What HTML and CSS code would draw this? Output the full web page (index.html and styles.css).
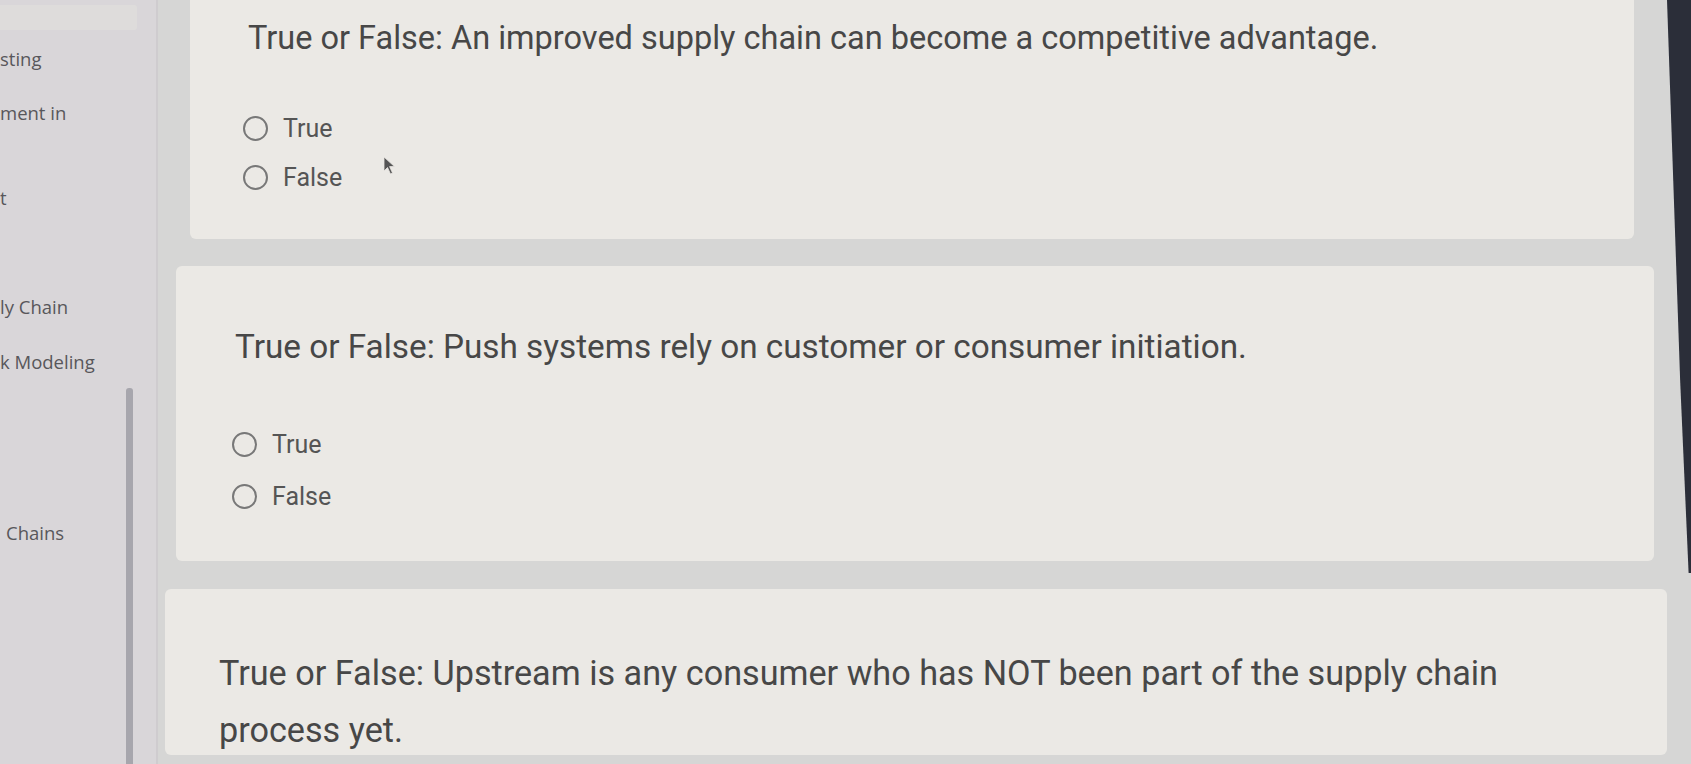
FILE: index.html
```html
<!DOCTYPE html>
<html lang="en">
<head>
<meta charset="utf-8">
<title>Quiz</title>
<link rel="stylesheet" href="styles.css">
</head>
<body>
<div class="screen">
  <aside class="sidebar">
    <div class="search"></div>
    <ul class="nav">
      <li class="nav-item n1">sting</li>
      <li class="nav-item n2">ment in</li>
      <li class="nav-item n3">t</li>
      <li class="nav-item n4">ly Chain</li>
      <li class="nav-item n5">k Modeling</li>
      <li class="nav-item n6">Chains</li>
    </ul>
    <div class="thumb"></div>
  </aside>
  <main class="main">
    <section class="card card1">
      <h2 class="question">True or False: An improved supply chain can become a competitive advantage.</h2>
      <div class="options">
        <label class="option"><span class="radio"></span><span class="opt-text">True</span></label>
        <label class="option"><span class="radio"></span><span class="opt-text">False</span></label>
      </div>
      <svg class="cursor" width="14" height="20" viewBox="0 0 14 20" aria-hidden="true">
        <path d="M1 1 L1 15 L4.5 11.5 L7.5 18 L9.5 17 L6.6 10.6 L11.5 10.6 Z" fill="#555" stroke="#e8e6e2" stroke-width="0.8" stroke-linejoin="round"/>
      </svg>
    </section>
    <section class="card card2">
      <h2 class="question">True or False: Push systems rely on customer or consumer initiation.</h2>
      <div class="options">
        <label class="option"><span class="radio"></span><span class="opt-text">True</span></label>
        <label class="option"><span class="radio"></span><span class="opt-text">False</span></label>
      </div>
    </section>
    <section class="card card3">
      <h2 class="question">True or False: Upstream is any consumer who has NOT been part of the supply chain process yet.</h2>
    </section>
  </main>
  <div class="bezel"></div>
</div>
</body>
</html>
```
FILE: styles.css
```css
* { box-sizing: border-box; }
html, body { margin: 0; padding: 0; }
body {
  width: 1691px;
  height: 764px;
  overflow: hidden;
  background: #d6d6d5;
  font-family: Roboto, "Liberation Sans", Arial, sans-serif;
}
.screen {
  display: flex;
  height: 764px;
}
.sidebar {
  position: relative;
  width: 158px;
  flex: 0 0 158px;
  background: #d9d6d9;
  border-right: 2px solid #cfcccf;
  padding-top: 5px;
  overflow: hidden;
}
.search {
  width: 137px;
  height: 25px;
  background: #dedcdb;
  border-radius: 0 3px 3px 0;
}
.nav {
  list-style: none;
  margin: 0;
  padding: 0;
  font-family: "Open Sans", "Liberation Sans", sans-serif;
  font-size: 18.5px;
  color: #58575b;
}
.nav-item { line-height: 24px; white-space: nowrap; }
.n1 { margin-top: 17px; }
.n2 { margin-top: 30px; }
.n3 { margin-top: 61px; }
.n4 { margin-top: 85px; }
.n5 { margin-top: 31px; }
.n6 { margin-top: 147px; padding-left: 6px; }
.thumb {
  position: absolute;
  left: 126px;
  top: 388px;
  width: 7px;
  height: 400px;
  background: #a7a6ad;
  border-radius: 3px;
}
.main {
  flex: 1;
  display: flex;
  flex-direction: column;
  background: #d6d6d5;
}
.card {
  background: #ebe9e5;
  border-radius: 6px;
  color: #484848;
}
.card1 {
  position: relative;
  margin: -10px 33px 0 32px;
  height: 249px;
  padding: 28px 0 0 58px;
}
.cursor {
  position: absolute;
  left: 193px;
  top: 166px;
}
.card2 {
  margin: 27px 13px 0 18px;
  height: 295px;
  padding: 61px 0 0 59px;
}
.card3 {
  margin: 28px 0 0 7px;
  height: 166px;
  padding: 56px 0 0 54px;
}
.question {
  margin: 0;
  font-weight: 400;
  font-size: 32.5px;
  line-height: 40px;
  color: #474747;
}
.card2 .question { font-size: 33.3px; }
.card3 .question {
  font-size: 34.2px;
  line-height: 57px;
  max-width: 1360px;
}
.options {
  display: flex;
  flex-direction: column;
  margin-top: 46px;
  margin-left: -5px;
}
.card2 .options { margin-top: 51px; margin-left: -3px; }
.option {
  display: flex;
  align-items: center;
  gap: 15px;
  height: 49px;
}
.card2 .option { height: 52px; }
.radio {
  width: 25px;
  height: 25px;
  border: 2px solid #787878;
  border-radius: 50%;
  flex: 0 0 25px;
}
.opt-text {
  font-size: 25px;
  color: #555;
}
.bezel {
  flex: 0 0 24px;
  background: #2b2e39;
  clip-path: polygon(0 0, 100% 0, 100% 75%, 90% 75%, 55% 50%);
}
```
